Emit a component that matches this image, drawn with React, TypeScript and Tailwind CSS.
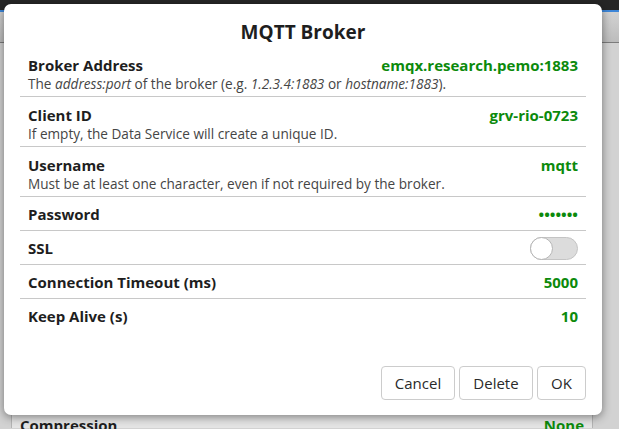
import React from 'react';

const font = { fontFamily: '"Open Sans", "Noto Sans", sans-serif' };

interface Setting {
  label: string;
  desc?: React.ReactNode;
  value?: string;
  toggle?: boolean;
}

const settings: Setting[] = [
  {
    label: 'Broker Address',
    desc: (
      <>
        The <i>address:port</i> of the broker (e.g. <i>1.2.3.4:1883</i> or <i>hostname:1883</i>).
      </>
    ),
    value: 'emqx.research.pemo:1883',
  },
  { label: 'Client ID', desc: 'If empty, the Data Service will create a unique ID.', value: 'grv-rio-0723' },
  { label: 'Username', desc: 'Must be at least one character, even if not required by the broker.', value: 'mqtt' },
  { label: 'Password', value: '•••••••' },
  { label: 'SSL', toggle: true },
  { label: 'Connection Timeout (ms)', value: '5000' },
  { label: 'Keep Alive (s)', value: '10' },
];

const Toggle = () => (
  <div className="w-[48px] h-[23px] rounded-full bg-[#dcdcdc] border border-[#c4c4c4] flex items-center">
    <div className="w-[23px] h-[23px] -ml-px rounded-full bg-white border border-[#b4b4b4]" />
  </div>
);

const SettingRow: React.FC<{ s: Setting; last: boolean }> = ({ s, last }) => (
  <div
    className={`px-[8px] ${s.desc ? 'pt-[8px] pb-[4px]' : 'pt-[7px] pb-[6px]'} ${last ? '' : 'border-b border-[#c8c8c8]'}`}
  >
    <div className="flex items-center justify-between h-[20px]">
      <span className="text-[15px] font-bold text-[#1e1e1e] leading-[20px]">{s.label}</span>
      {s.toggle ? (
        <Toggle />
      ) : (
        <span className="text-[15px] font-bold text-[#0c8a0c] leading-[20px]">{s.value}</span>
      )}
    </div>
    {s.desc && <div className="text-[13.6px] text-[#454545] leading-[17px]">{s.desc}</div>}
  </div>
);

export default function App() {
  return (
    <div className="relative w-[619px] h-[429px] overflow-hidden bg-[#d2d2d2]" style={font}>
      {/* window behind */}
      <div className="h-[10px] bg-[#262626]" />
      <div className="h-[2px] bg-[#3d86d8]" />
      <div className="h-[31px] bg-gradient-to-b from-[#d2d2d2] to-[#bcbcbc] border-b border-[#7c7c7c]" />
      <div className="flex h-[385px] pl-[11px] pr-[26px]">
        <div className="flex-1 bg-[#e4e4e4] border-x border-[#b4b4b4] pt-[372px] pl-[8px] pr-[8px]">
          <div className="flex justify-between text-[15px] font-bold leading-[20px]">
            <span className="text-[#1e1e1e]">Compression</span>
            <span className="text-[#0c8a0c]">None</span>
          </div>
        </div>
      </div>

      {/* dialog */}
      <div className="absolute left-[4px] top-[4px] w-[598px] h-[411px] bg-white rounded-[7px] shadow-[0_2px_10px_rgba(0,0,0,0.45)] flex flex-col">
        <div className="h-[43px] pt-[14px] text-center text-[19px] font-bold text-[#1e1e1e] leading-[28px]">
          MQTT Broker
        </div>
        <div className="mx-[16px]">
          {settings.map((s, i) => (
            <SettingRow key={s.label} s={s} last={i === settings.length - 1} />
          ))}
        </div>
        <div className="flex-1" />
        <div className="flex justify-end gap-[4px] pr-[16px] pb-[15px]">
          {['Cancel', 'Delete', 'OK'].map(b => (
            <button
              key={b}
              className={`${b === 'OK' ? 'w-[49px]' : 'w-[74px]'} h-[34px] bg-white border border-[#cccccc] rounded-[4px] text-[15px] text-[#2a2a2a]`}
            >
              {b}
            </button>
          ))}
        </div>
      </div>
    </div>
  );
}
